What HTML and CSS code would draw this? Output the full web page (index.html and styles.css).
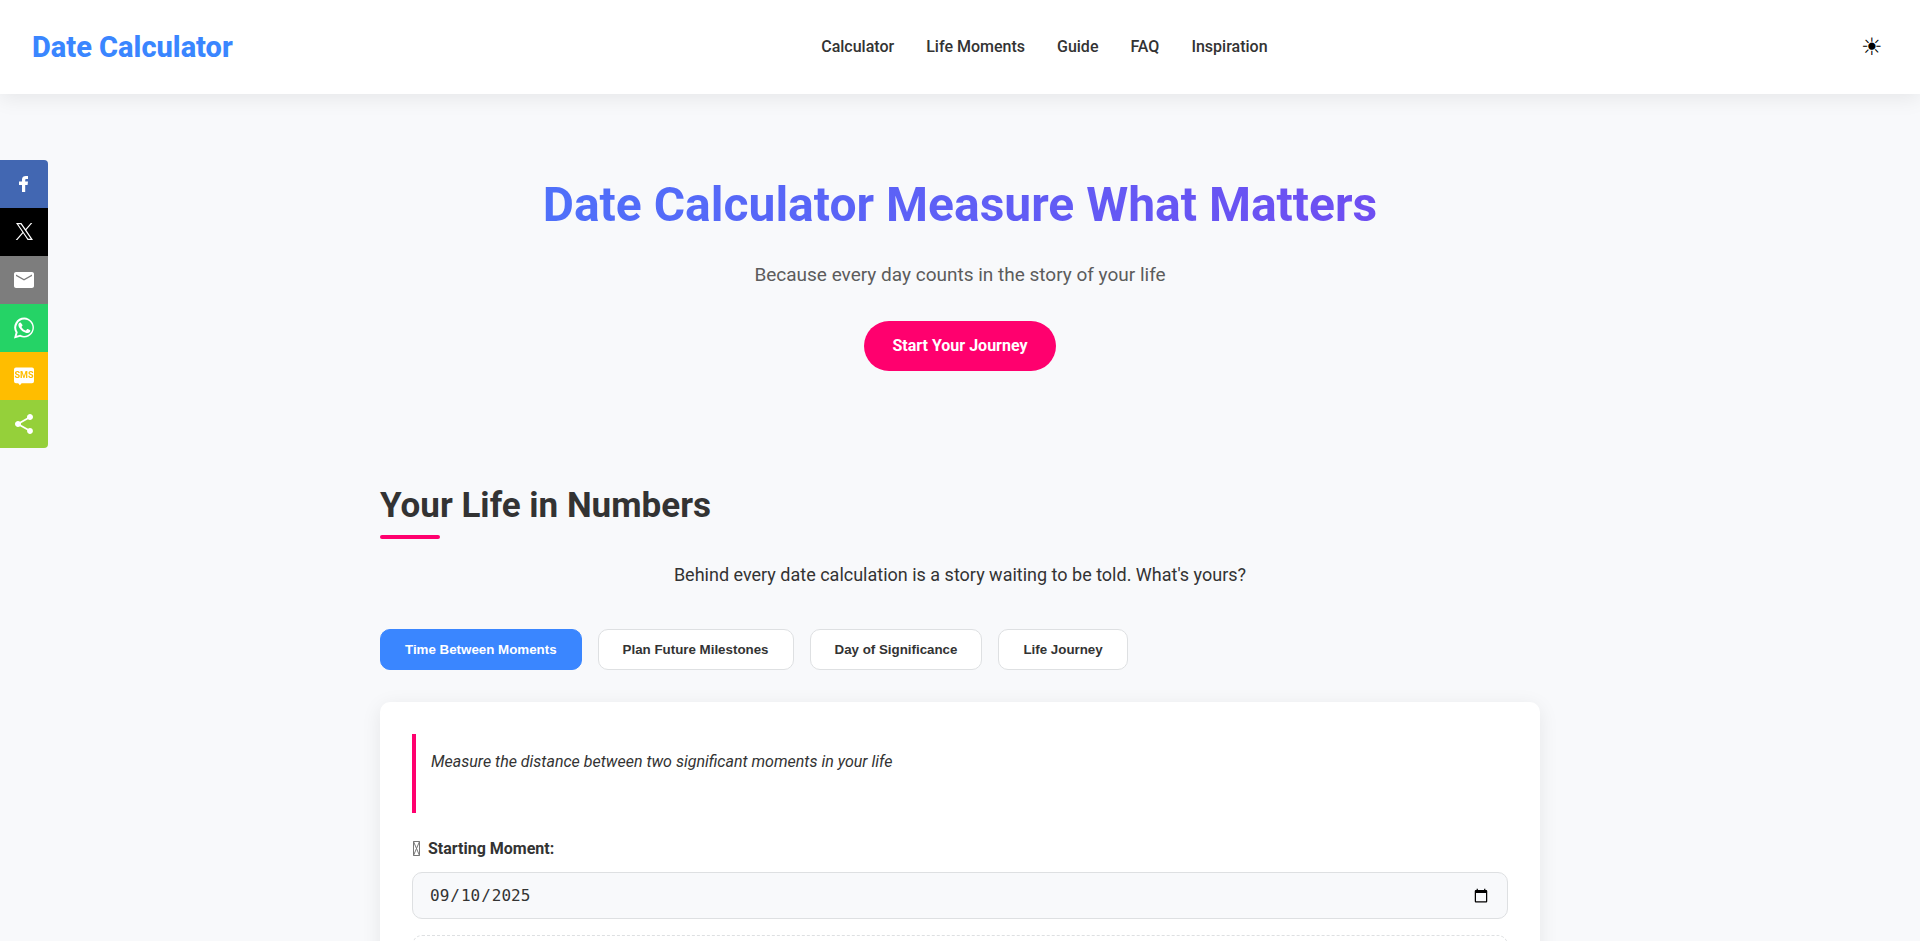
FILE: index.html
```html
<!DOCTYPE html>
<html lang="en">

<head>
    <meta charset="UTF-8">
    <meta name="viewport" content="width=device-width, initial-scale=1.0">
    <title>Date Calculator</title>
    <link rel="stylesheet" href="styles.css">
</head>

<body>
    <header class="header">
        <a href="#" class="logo">Date Calculator</a>
        <nav>
            <ul class="nav-links">
                <li><a href="#calculator">Calculator</a></li>
                <li><a href="#moments">Life Moments</a></li>
                <li><a href="#guide">Guide</a></li>
                <li><a href="#faq">FAQ</a></li>
                <li><a href="#inspiration">Inspiration</a></li>
            </ul>
        </nav>
        <button type="button" class="theme-toggle" aria-label="Toggle theme">☀</button>
    </header>

    <!-- Sticky share buttons -->
    <div class="share-bar">
        <a href="#" class="share-btn facebook" aria-label="Facebook">
            <svg viewBox="0 0 24 24"><path d="M10 20v-7H7v-3.500h3V7.400C10 5.200 11.500 4 13.900 4H16v3h-1.400c-1.100 0-1.400.5-1.400 1.300v1.200H16l-.4 3.500h-2.400v7z"/></svg>
        </a>
        <a href="#" class="share-btn twitter" aria-label="X">
            <svg viewBox="0 0 24 24"><path fill-rule="evenodd" d="M4 3h5.400l4.200 6L18.800 3h1.500l-6 7 6.700 10h-5.400l-4.500-6.700L5.300 20H3.700l6.700-7.700zM6.200 4.200l10 14.600h2.500L8.700 4.200z"/></svg>
        </a>
        <a href="#" class="share-btn email" aria-label="Email">
            <svg viewBox="0 0 24 24"><path d="M20 4H4c-1.100 0-2 .9-2 2v12c0 1.100.9 2 2 2h16c1.100 0 2-.9 2-2V6c0-1.100-.9-2-2-2zm0 4l-8 4.500L4 8V6.500l8 4.500 8-4.500z"/></svg>
        </a>
        <a href="#" class="share-btn whatsapp" aria-label="WhatsApp">
            <svg viewBox="0 0 24 24"><path d="M12.300 1.600a10 10 0 0 0-8.700 15L2 22.400l6-1.600a10 10 0 1 0 4.300-19.200zm0 1.900a8.200 8.200 0 1 1-4.100 15.300l-3.500.9 1-3.400a8.200 8.200 0 0 1 6.600-12.800z"/><path d="M9 7c-.3-.6-.5-.6-.8-.6-.8 0-1.800.9-1.800 2.500 0 1.400 1 2.800 1.200 3 .1.200 2 3.200 5 4.400 2.500 1 3 .8 3.500.7.600 0 1.800-.7 2-1.400.3-.7.300-1.300.2-1.400l-2.500-1.200c-.3-.1-.6-.2-.8.2l-1 1.200c-.2.200-.4.200-.7.100a7 7 0 0 1-3.700-3.300c-.2-.4 0-.5.200-.7l.7-.9c.1-.2.100-.4 0-.6z"/></svg>
        </a>
        <a href="#" class="share-btn sms" aria-label="SMS">
            <svg viewBox="0 0 24 24"><path d="M4 3.400h16a2 2 0 0 1 2 2v11.800a2 2 0 0 1-2 2H9.600L7.900 21.200l-1.700-2H4a2 2 0 0 1-2-2V5.400a2 2 0 0 1 2-2z"/><text x="12" y="14" text-anchor="middle">SMS</text></svg>
        </a>
        <a href="#" class="share-btn sharethis" aria-label="Share">
            <svg viewBox="0 0 24 24"><path d="M18 16.080c-.76 0-1.440.3-1.960.77L8.910 12.700c.05-.23.090-.46.090-.7s-.04-.47-.09-.7l7.050-4.110c.54.5 1.250.81 2.040.81 1.660 0 3-1.340 3-3s-1.340-3-3-3-3 1.340-3 3c0 .24.040.47.090.7L8.040 9.810C7.500 9.310 6.790 9 6 9c-1.660 0-3 1.340-3 3s1.340 3 3 3c.79 0 1.500-.31 2.040-.81l7.120 4.160c-.05.21-.08.43-.08.65 0 1.610 1.310 2.920 2.920 2.920s2.920-1.310 2.920-2.920-1.310-2.920-2.920-2.920z"/></svg>
        </a>
    </div>

    <section class="hero">
        <h1>Date Calculator Measure What Matters</h1>
        <p>Because every day counts in the story of your life</p>
        <a href="#calculator" class="cta-button">Start Your Journey</a>
    </section>

    <main class="container" id="calculator">
        <h2 class="section-title">Your Life in Numbers</h2>
        <p class="section-intro">Behind every date calculation is a story waiting to be told. What's yours?</p>

        <div class="tabs">
            <button type="button" class="tab active">Time Between Moments</button>
            <button type="button" class="tab">Plan Future Milestones</button>
            <button type="button" class="tab">Day of Significance</button>
            <button type="button" class="tab">Life Journey</button>
        </div>

        <div class="card">
            <div class="quote">
                <p>Measure the distance between two significant moments in your life</p>
            </div>
            <div class="form-group">
                <label for="start-date">
                    <svg class="label-icon" viewBox="0 0 8 16"><path d="M1.500.5h6v14h-6zl6 14M7.500.5l-6 14"/></svg>
                    Starting Moment:
                </label>
                <input type="date" id="start-date" value="2025-09-10">
            </div>
            <div class="moment-note"></div>
        </div>
    </main>
</body>

</html>
```
FILE: styles.css
```css
:root {
    --primary: #3a86ff;
    --secondary: #8338ec;
    --accent: #ff006e;
    --bg: #f8f9fb;
    --text: #333;
    --border: #dee0e2;
    --shadow: 0 4px 20px rgba(0, 0, 0, 0.08);
}

* {
    margin: 0;
    padding: 0;
    box-sizing: border-box;
}

body {
    font-family: Roboto, sans-serif;
    font-size: 16px;
    line-height: 26px;
    background-color: var(--bg);
    color: var(--text);
}

a {
    text-decoration: none;
}

/* Header */
.header {
    display: flex;
    justify-content: space-between;
    align-items: center;
    padding: 24px 32px;
    background-color: #fff;
    box-shadow: var(--shadow);
}

.logo {
    font-size: 29px;
    line-height: 46px;
    font-weight: 800;
    color: var(--primary);
}

.nav-links {
    display: flex;
    gap: 32px;
    list-style: none;
}

.nav-links a {
    color: var(--text);
    font-weight: 500;
}

.theme-toggle {
    padding: 0 5px;
    background: none;
    border: none;
    color: #000;
    font-family: Roboto, sans-serif;
    font-size: 24px;
    cursor: pointer;
}

/* Share bar */
.share-bar {
    position: fixed;
    top: 160px;
    left: 0;
    width: 48px;
    border-radius: 0 4px 4px 0;
    overflow: hidden;
}

.share-btn {
    display: flex;
    justify-content: center;
    align-items: center;
    height: 48px;
}

.share-btn svg {
    width: 24px;
    height: 24px;
    fill: #fff;
}

.facebook {
    background-color: #4267b2;
}

.twitter {
    background-color: #000;
}

.email {
    background-color: #7d7d7d;
}

.whatsapp {
    background-color: #25d366;
}

.sms {
    background-color: #ffbd00;
}

.sms text {
    fill: #ffbd00;
    font-family: "Liberation Sans Narrow", Roboto, sans-serif;
    font-size: 9px;
    font-weight: 700;
}

.sharethis {
    background-color: #95d03a;
}

/* Hero */
.hero {
    padding: 72px 0 80px;
    text-align: center;
}

.hero h1 {
    margin-bottom: 16px;
    font-size: 48px;
    line-height: 77px;
    background: linear-gradient(90deg, var(--primary), var(--secondary));
    -webkit-background-clip: text;
    background-clip: text;
    color: transparent;
}

.hero p {
    margin-bottom: 30px;
    font-size: 19px;
    line-height: 32px;
    color: #5c5c5c;
}

.cta-button {
    display: inline-block;
    padding: 12px 28px;
    background-color: var(--accent);
    border-radius: 50px;
    color: #fff;
    font-weight: 700;
}

/* Calculator section */
.container {
    max-width: 1200px;
    margin: 0 auto;
    padding: 28px 20px;
}

.section-title {
    margin-bottom: 22px;
    font-size: 35px;
    line-height: 54px;
}

.section-title::after {
    content: "";
    display: block;
    width: 60px;
    height: 4px;
    margin-top: 2px;
    background-color: var(--accent);
    border-radius: 2px;
}

.section-intro {
    margin-bottom: 40px;
    font-size: 18px;
    line-height: 28px;
    text-align: center;
}

.tabs {
    display: flex;
    flex-wrap: wrap;
    gap: 16px;
    margin-bottom: 32px;
}

.tab {
    padding: 12px 24px;
    background-color: #fff;
    border: 1px solid var(--border);
    border-radius: 10px;
    color: var(--text);
    font-family: "Liberation Sans", Arial, sans-serif;
    font-weight: 600;
    cursor: pointer;
}

.tab.active {
    background-color: var(--primary);
    border-color: var(--primary);
    color: #fff;
}

.card {
    padding: 32px;
    background-color: #fff;
    border-radius: 10px;
    box-shadow: var(--shadow);
}

.quote {
    margin-bottom: 24px;
    padding: 15px 15px 38px;
    border-left: 4px solid var(--accent);
    font-style: italic;
}

.form-group label {
    display: flex;
    align-items: center;
    gap: 8px;
    margin-bottom: 11px;
    line-height: 24px;
    font-weight: 700;
}

.label-icon {
    width: 8px;
    height: 16px;
    fill: none;
    stroke: #777;
    stroke-width: 1;
}

.form-group input {
    width: 100%;
    padding: 12px 16px;
    background-color: var(--bg);
    border: 1px solid var(--border);
    border-radius: 10px;
    color: var(--text);
    font-family: "DejaVu Sans Mono", monospace;
    font-size: 16px;
}

.moment-note {
    min-height: 80px;
    margin-top: 16px;
    border: 1px dashed var(--border);
    border-radius: 10px;
}
```
